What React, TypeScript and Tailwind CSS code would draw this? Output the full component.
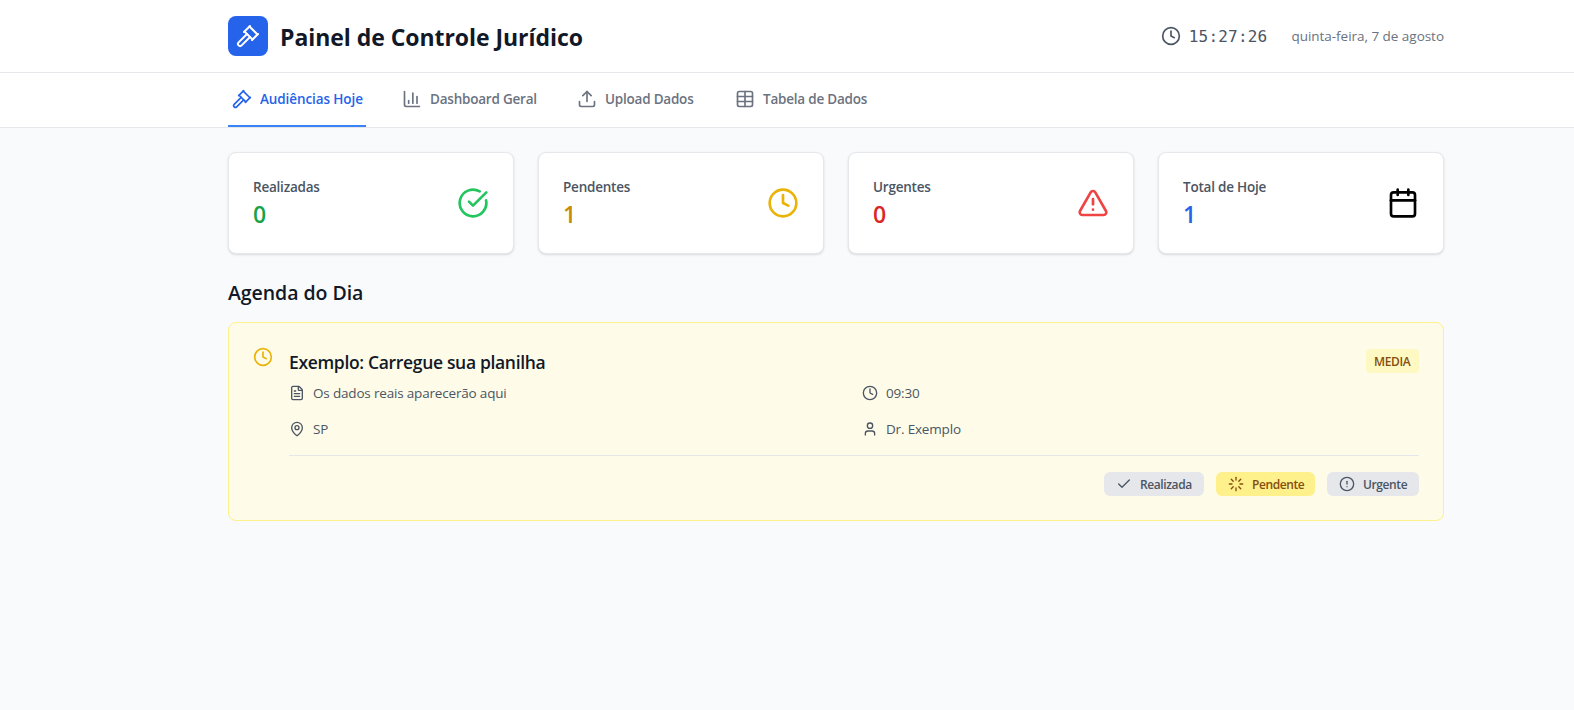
import type { ReactNode } from "react";
import { Clock, Upload, Table, CircleCheckBig, TriangleAlert, Calendar, FileText, MapPin, User, Check, Loader, CircleAlert } from "lucide-react";

function Gavel({ className }: { className: string }) {
  return (
    <svg viewBox="0 0 24 24" fill="none" stroke="currentColor" strokeWidth="2" strokeLinecap="round" strokeLinejoin="round" className={className}>
      <path d="m14 13-8.381 8.38a1 1 0 0 1-3.001-3L11 9.999" />
      <path d="m16 16 6-6" />
      <path d="m21.5 10.5-8-8" />
      <path d="m8 8 6-6" />
      <path d="m8.5 7.5 8 8" />
    </svg>
  );
}

function BarChart({ className }: { className: string }) {
  return (
    <svg viewBox="0 0 24 24" fill="none" stroke="currentColor" strokeWidth="2" strokeLinecap="round" strokeLinejoin="round" className={className}>
      <path d="M3 3v16a2 2 0 0 0 2 2h16" />
      <path d="M18 17V9" />
      <path d="M13 17V5" />
      <path d="M8 17v-3" />
    </svg>
  );
}

function Tab({ icon, label, active, width }: { icon: ReactNode; label: string; active?: boolean; width: string }) {
  return (
    <button className={`flex items-center gap-2 whitespace-nowrap border-b-2 px-1 py-4 text-[13.5px] leading-5 font-semibold ${width} ${active ? "border-[#3b82f6] tracking-[-0.1px] text-[#2563eb]" : "border-transparent tracking-[-0.22px] text-[#6b7280]"}`}>
      {icon}
      <span>{label}</span>
    </button>
  );
}

function Stat({ label, value, color, icon }: { label: string; value: string; color: string; icon: ReactNode }) {
  return (
    <div className="flex items-center justify-between rounded-lg border border-[#e5e7eb] bg-white p-6 shadow-sm">
      <div>
        <p className="text-[13.5px] leading-5 font-semibold tracking-[-0.22px] text-[#4b5563]">{label}</p>
        <p className={`pt-0.5 text-[23px] leading-[30px] font-semibold ${color}`}>{value}</p>
      </div>
      {icon}
    </div>
  );
}

function Detail({ icon, children }: { icon: ReactNode; children: ReactNode }) {
  return (
    <div className="flex items-center gap-2">
      {icon}
      <span>{children}</span>
    </div>
  );
}

export default function App() {
  return (
    <div className="min-h-screen bg-[#f9fafb] font-['Open_Sans','Noto_Sans',sans-serif]">
      <header className="border-b border-[#e5e7eb] bg-white pr-[130px] pl-[228px]">
        <div className="flex items-center justify-between py-4">
          <div className="flex items-center gap-3">
            <div className="flex size-10 items-center justify-center rounded-lg bg-[#2563eb] text-white">
              <Gavel className="size-6" />
            </div>
            <h1 className="pt-0.5 text-[23px] leading-8 font-bold tracking-[-0.05px] text-[#111827]">Painel de Controle Jurídico</h1>
          </div>
          <div className="flex items-center gap-6">
            <div className="flex items-center gap-2 text-[#4b5563]">
              <Clock className="size-5" />
              <span className="font-['DejaVu_Sans_Mono',monospace] pt-px text-[16px] leading-[23px] tracking-[0.2px]">15:27:26</span>
            </div>
            <span className="text-[13.5px] leading-5 tracking-[-0.03px] text-[#6b7280]">quinta-feira, 7 de agosto</span>
          </div>
        </div>
      </header>

      <nav className="flex gap-8 border-b border-[#e5e7eb] bg-white pl-[228px]">
        <Tab active width="w-[138px]" label="Audiências Hoje" icon={<Gavel className="size-5 shrink-0" />} />
        <Tab width="w-[143px]" label="Dashboard Geral" icon={<BarChart className="size-5 shrink-0" />} />
        <Tab width="w-[126px]" label="Upload Dados" icon={<Upload className="size-5 shrink-0" />} />
        <Tab width="w-[141px]" label="Tabela de Dados" icon={<Table className="size-5 shrink-0" />} />
      </nav>

      <main className="pt-6 pr-[130px] pl-[228px]">
        <section className="grid grid-cols-4 gap-6">
          <Stat label="Realizadas" value="0" color="text-[#16a34a]" icon={<CircleCheckBig className="size-8 text-[#22c55e]" />} />
          <Stat label="Pendentes" value="1" color="text-[#ca8a04]" icon={<Clock className="size-8 text-[#eab308]" />} />
          <Stat label="Urgentes" value="0" color="text-[#dc2626]" icon={<TriangleAlert className="size-8 text-[#ef4444]" />} />
          <Stat label="Total de Hoje" value="1" color="text-[#2563eb]" icon={<Calendar className="size-8 text-black" />} />
        </section>

        <h2 className="mt-6 pt-0.5 text-[19.5px] leading-[26px] font-semibold tracking-[-0.05px] text-[#111827]">Agenda do Dia</h2>

        <article className="mt-4 flex gap-4 rounded-lg border border-[#fef08a] bg-[#fefce8] p-6">
          <Clock className="size-5 shrink-0 text-[#eab308]" />
          <div className="flex-1">
            <div className="flex items-center justify-between">
              <h3 className="pt-0.5 text-[17.5px] leading-[26px] font-semibold tracking-[-0.33px] text-[#111827]">Exemplo: Carregue sua planilha</h3>
              <span className="my-0.5 w-[53px] rounded bg-[#fef9c3] px-2 pt-[5px] pb-[3px] text-[12px] leading-4 font-semibold tracking-[-0.35px] text-[#854d0e]">MEDIA</span>
            </div>
            <div className="mt-2 grid grid-cols-2 gap-4 text-[13.5px] leading-5 tracking-[-0.18px] text-[#4b5563]">
              <Detail icon={<FileText className="size-4" />}>Os dados reais aparecerão aqui</Detail>
              <Detail icon={<Clock className="size-4" />}>09:30</Detail>
              <Detail icon={<MapPin className="size-4" />}>SP</Detail>
              <Detail icon={<User className="size-4" />}>Dr. Exemplo</Detail>
            </div>
            <div className="mt-4 flex justify-end gap-3 border-t border-[#e5e7eb] pt-4 text-[12px] leading-4 font-semibold tracking-[-0.4px]">
              <button className="flex h-6 w-[100px] items-center gap-2 rounded-md bg-[#e5e7eb] px-3 text-[#4b5563]"><Check className="size-4 shrink-0" /><span className="pt-0.5">Realizada</span></button>
              <button className="flex h-6 w-[99px] items-center gap-2 rounded-md bg-[#fef08a] px-3 text-[#854d0e]"><Loader className="size-4 shrink-0" /><span className="pt-0.5">Pendente</span></button>
              <button className="flex h-6 w-[92px] items-center gap-2 rounded-md bg-[#e5e7eb] px-3 text-[#4b5563]"><CircleAlert className="size-4 shrink-0" /><span className="pt-0.5">Urgente</span></button>
            </div>
          </div>
        </article>
      </main>
    </div>
  );
}
